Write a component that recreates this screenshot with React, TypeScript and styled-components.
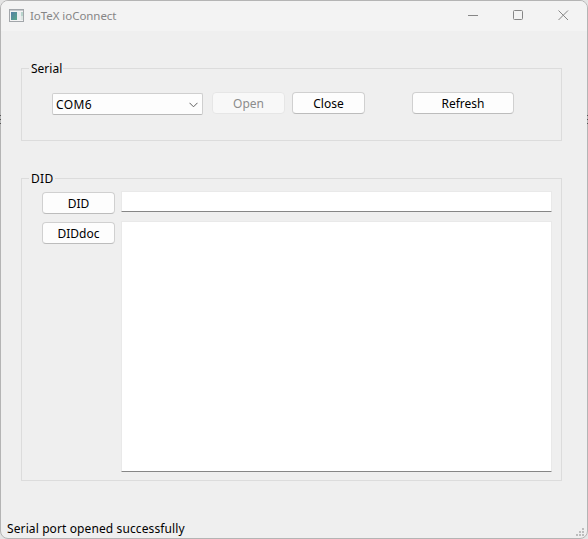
import React from 'react';
import styled, { createGlobalStyle } from 'styled-components';

const GlobalStyle = createGlobalStyle`
  * { box-sizing: border-box; }
  html, body { margin: 0; background: #e4e4e4; overflow: hidden; }
`;

const Window = styled.main`
  display: flex;
  flex-direction: column;
  width: 588px;
  height: 539px;
  border: 1px solid #b4b4b4;
  border-radius: 8px;
  background: #efefef;
  overflow: hidden;
  font: 12px/16px 'Noto Sans', 'Open Sans', sans-serif;
  color: #000;
`;

/* Sliver of the desktop that shows along a side of the window frame. */
const EdgeMarks = styled.i<{ $side: 'left' | 'right' }>`
  position: absolute;
  top: 115px;
  ${(p) => p.$side}: 0;
  width: 1px;
  height: 12px;
  background: repeating-linear-gradient(#555 0 1px, #b4b4b4 1px 4px);
`;

const TitleBar = styled.header`
  display: flex;
  align-items: center;
  height: 30px;
  flex: none;
  padding-left: 8px;
  background: #f3f3f3;
  color: #868686;
`;

const AppIcon = styled.svg`
  margin-top: -2px;
`;

const Title = styled.span`
  margin-left: 6px;
  margin-right: auto;
  font-size: 11.5px;
  letter-spacing: -0.05px;
  white-space: nowrap;
`;

const Caption = styled.div`
  display: flex;
  width: 136px;
  height: 30px;
`;

const Content = styled.div`
  display: flex;
  flex-direction: column;
  gap: 37px;
  flex: 1;
  padding: 37px 25px 0 20px;
`;

const Group = styled.section<{ $height: number }>`
  display: flex;
  flex-direction: column;
  flex: none;
  height: ${(p) => p.$height}px;
  width: 541px;
  border: 1px solid #dcdcdc;
`;

const Legend = styled.h2<{ $spacing?: number }>`
  align-self: flex-start;
  height: 16px;
  margin: -8px 0 0 7px;
  padding: 0 1px 0 2px;
  background: #efefef;
  font-size: 12px;
  font-weight: 400;
  line-height: 16px;
  letter-spacing: ${(p) => p.$spacing ?? 0}px;
`;

const SerialRow = styled.div`
  display: flex;
  padding: 15px 0 0 30px;
`;

const Select = styled.div`
  display: flex;
  align-items: center;
  justify-content: space-between;
  width: 151px;
  height: 22px;
  margin: 1px 9px 0 0;
  padding: 1px 4px 0 3px;
  border: 1px solid #cfcfcf;
  border-bottom-color: #b9b9b9;
  border-radius: 2px;
  background: #fdfdfd;
  line-height: 17px;
  letter-spacing: 0.4px;
`;

const Button = styled.button<{ $width?: number; $gap?: number }>`
  display: block;
  width: ${(p) => p.$width ?? 73}px;
  height: 22px;
  margin: 0 ${(p) => p.$gap ?? 0}px 0 0;
  padding: 2px 0 0;
  border: 1px solid #d0d0d0;
  border-bottom-color: #bcbcbc;
  border-radius: 4px;
  background: #fdfdfd;
  color: #000;
  font: inherit;
  &:disabled {
    border-color: #e6e6e6;
    background: #f8f8f8;
    color: #8c8c8c;
  }
`;

const DidGrid = styled.div`
  display: grid;
  grid-template-columns: 73px 431px;
  grid-template-rows: 21px 251px;
  gap: 9px 6px;
  padding: 4px 0 0 20px;
`;

const ButtonCell = styled.div`
  padding-top: 1px;
`;

const Field = styled.div`
  border: 1px solid #e9e9e9;
  border-bottom: 1px solid #868686;
  border-radius: 1px;
  background: #fff;
`;

const StatusBar = styled.footer`
  display: flex;
  justify-content: space-between;
  align-items: flex-end;
  height: 20px;
  padding: 0 3px 1px 6px;
`;

const Status = styled.span`
  line-height: 17px;
  letter-spacing: 0.11px;
  white-space: nowrap;
`;

const Grip = styled.svg`
  margin-bottom: 1px;
`;

export default function App() {
  return (
    <>
      <GlobalStyle />
      <Window>
        <TitleBar>
          <AppIcon width="15" height="13" viewBox="0 0 15 13" shapeRendering="crispEdges">
            <defs>
              <linearGradient id="pane" x1="0" y1="0" x2="1" y2="1">
                <stop offset="0" stopColor="#547fa5" />
                <stop offset="1" stopColor="#5aa78a" />
              </linearGradient>
            </defs>
            <rect x=".5" y=".5" width="14" height="12" fill="#f4f4f4" stroke="#a2a6aa" />
            <path d="M1 1.5h13" stroke="#c6cace" />
            <rect x="2" y="3" width="6" height="8" fill="url(#pane)" />
            <rect x="8" y="3" width="4" height="8" fill="#eceef0" />
            <rect x="12" y="3" width="2" height="4" fill="#b8d4cc" />
            <rect x="12" y="7" width="2" height="4" fill="#dce6e2" />
          </AppIcon>
          <Title>IoTeX ioConnect</Title>
          <Caption>
            <svg width="45" height="30"><path d="M17 14.5h10" stroke="#868686" /></svg>
            <svg width="45" height="30"><rect x="17.5" y="9.5" width="9" height="9" rx="1" fill="none" stroke="#868686" /></svg>
            <svg width="46" height="30"><path d="m17.5 9.5 9.5 9.5m0-9.5-9.5 9.5" stroke="#868686" /></svg>
          </Caption>
        </TitleBar>
        <Content>
          <Group $height={73}>
            <Legend>Serial</Legend>
            <SerialRow>
              <Select>
                COM6
                <svg width="9" height="6" viewBox="0 0 9 6" fill="none" stroke="#606060"><path d="m.5.8 4 4 4-4" /></svg>
              </Select>
              <Button disabled $gap={7}>Open</Button>
              <Button $gap={47}>Close</Button>
              <Button $width={102}>Refresh</Button>
            </SerialRow>
          </Group>
          <Group $height={303}>
            <Legend $spacing={0.3}>DID</Legend>
            <DidGrid>
              <ButtonCell><Button>DID</Button></ButtonCell>
              <Field />
              <ButtonCell><Button>DIDdoc</Button></ButtonCell>
              <Field />
            </DidGrid>
          </Group>
        </Content>
        <StatusBar>
          <Status>Serial port opened successfully</Status>
          <Grip width="8" height="8" viewBox="0 0 8 8" fill="#bdbdbd" shapeRendering="crispEdges">
            <path d="M6 0h2v2H6zM3 3h2v2H3zM6 3h2v2H6zM0 6h2v2H0zM3 6h2v2H3zM6 6h2v2H6z" />
          </Grip>
        </StatusBar>
      </Window>
      <EdgeMarks $side="left" />
      <EdgeMarks $side="right" />
    </>
  );
}
